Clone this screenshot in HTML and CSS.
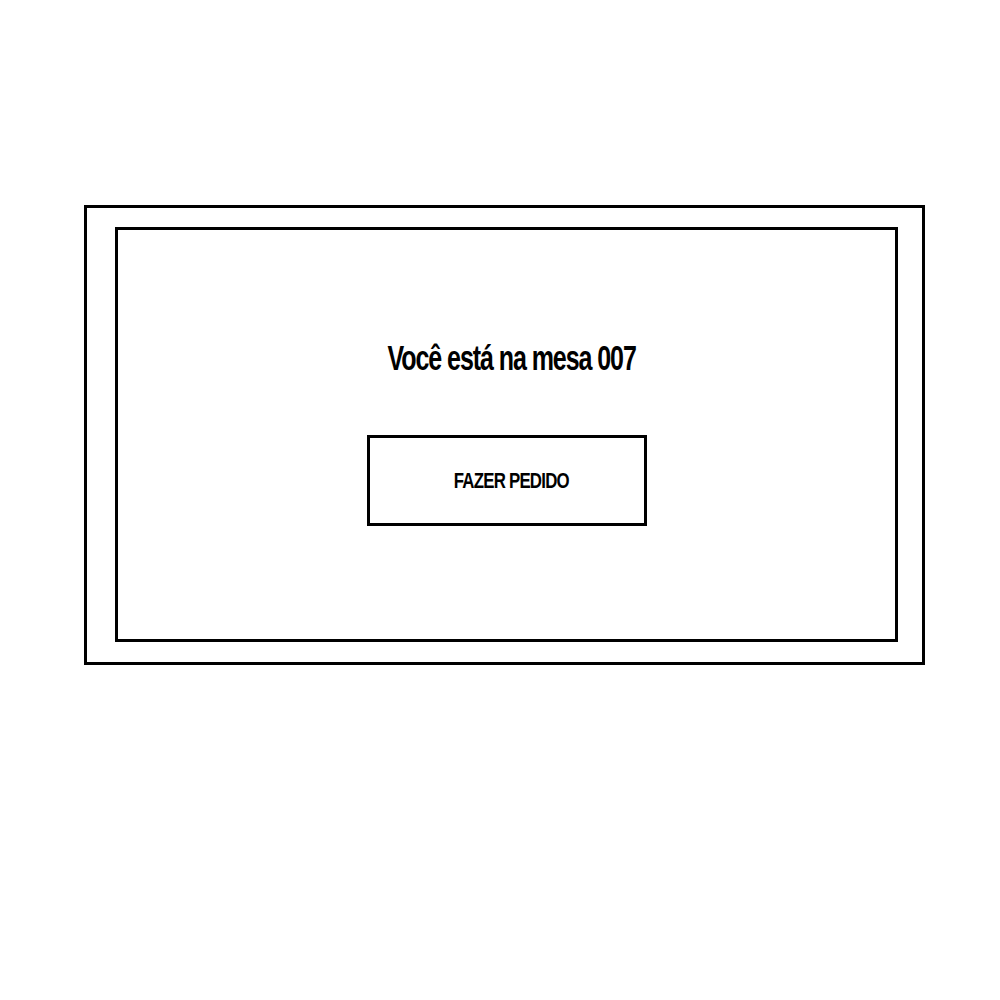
FILE: index.html
```html
<!DOCTYPE html>
<html lang="pt">
<head>
<meta charset="utf-8">
<title>Mesa 007</title>
<link rel="stylesheet" href="styles.css">
</head>
<body>
<div class="frame">
  <div class="panel">
    <h1 class="title">Você está na mesa 007</h1>
    <button class="order-btn"><span class="order-label">FAZER PEDIDO</span></button>
  </div>
</div>
</body>
</html>
```

FILE: styles.css
```css
html, body {
  margin: 0;
  padding: 0;
  background: #fff;
}
body {
  padding: 205px 0 0 84px;
  font-family: "Liberation Sans", Arial, sans-serif;
  color: #000;
}
.frame {
  box-sizing: border-box;
  width: 841px;
  height: 460px;
  border: 3px solid #000;
  padding: 19px 24px 20px 28px;
}
.panel {
  box-sizing: border-box;
  width: 783px;
  height: 415px;
  border: 3px solid #000;
  display: flex;
  flex-direction: column;
  align-items: center;
  padding-top: 108px;
}
.title {
  margin: 0;
  font-size: 35px;
  font-weight: 700;
  letter-spacing: -1.5px;
  line-height: 40px;
  transform: translateX(5px) scaleX(0.715);
}
.order-btn {
  margin-top: 57px;
  margin-left: 1px;
  box-sizing: border-box;
  width: 280px;
  height: 91px;
  border: 3px solid #000;
  background: #fff;
  padding: 0;
  font-family: "Liberation Sans", Arial, sans-serif;
  font-weight: 700;
  font-size: 22px;
  letter-spacing: -1px;
  color: #000;
}
.order-label {
  display: inline-block;
  transform: translateX(4px) scaleX(0.765);
}
```
